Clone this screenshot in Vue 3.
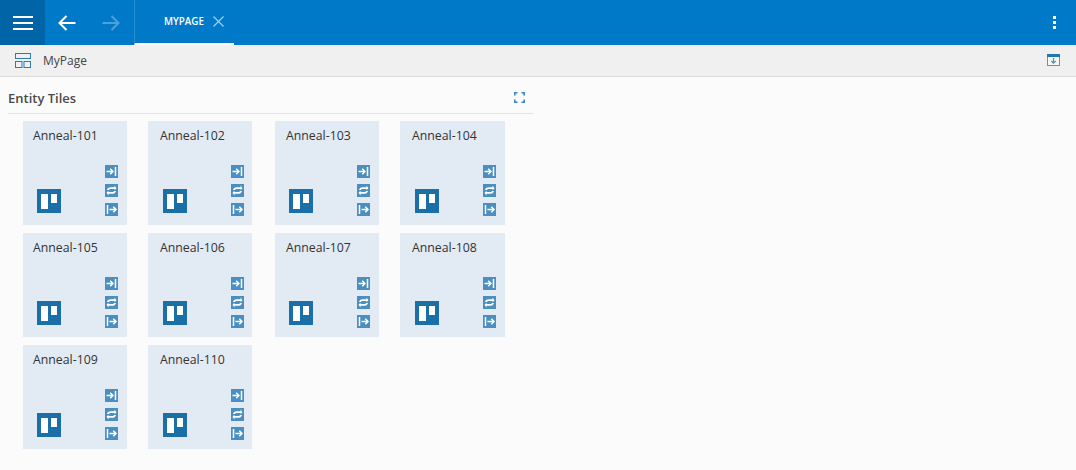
<script setup>
const tiles = Array.from({ length: 10 }, (_, i) => `Anneal-${101 + i}`)
</script>

<template>
  <div class="page">
    <header class="topbar">
      <button class="menu" aria-label="Menu">
        <svg width="20" height="14" viewBox="0 0 20 14"><path d="M0 1h20M0 7h20M0 13h20" stroke="#fff" stroke-width="2" /></svg>
      </button>
      <button class="nav" aria-label="Back">
        <svg width="18" height="16" viewBox="0 0 18 16"><path d="M8.5 1L1.5 8l7 7M2 8h15.5" fill="none" stroke="#fff" stroke-width="2" /></svg>
      </button>
      <button class="nav dim" aria-label="Forward">
        <svg width="18" height="16" viewBox="0 0 18 16"><path d="M9.5 1l7 7-7 7M16 8H.5" fill="none" stroke="#fff" stroke-width="2" /></svg>
      </button>
      <div class="tab">
        <span>MYPAGE</span>
        <svg width="11" height="11" viewBox="0 0 11 11"><path d="M.5.5l10 10M10.500.5l-10 10" stroke="#a9d2ee" stroke-width="1.1" /></svg>
      </div>
      <div class="dots" aria-label="More"><i></i><i></i><i></i></div>
    </header>

    <div class="toolbar">
      <svg class="page-icon" width="16" height="15" viewBox="0 0 16 15" fill="none" stroke="#2b7cb3">
        <rect x=".5" y=".5" width="15" height="5" />
        <rect x=".5" y="8.500" width="6.500" height="6" />
        <rect x="9" y="8.500" width="6.500" height="6" />
      </svg>
      <span class="page-name">MyPage</span>
      <svg class="download" width="13" height="12" viewBox="0 0 13 12">
        <rect x=".5" y=".5" width="12" height="11" fill="#f6f6f6" stroke="#4d9bd0" />
        <rect x="0" y="0" width="13" height="3" fill="#1f78b4" />
        <path d="M6.500 4v5M4.300 7l2.200 2.200L8.700 7" fill="none" stroke="#5a8fb3" stroke-width="1.2" />
      </svg>
    </div>

    <main class="content">
      <section class="panel">
        <div class="panel-head">
          <h2>Entity Tiles</h2>
          <svg width="11" height="11" viewBox="0 0 11 11" fill="none" stroke="#3d86b8" stroke-width="1.6">
            <path d="M.8 3.500V.8h2.700M7.500.8h2.700v2.700M10.200 7.500v2.700H7.500M3.500 10.200H.8V7.500" />
          </svg>
        </div>
        <div class="grid">
          <article v-for="name in tiles" :key="name" class="tile">
            <div class="tile-name">{{ name }}</div>
            <div class="tile-foot">
              <svg class="logo" width="24" height="24" viewBox="0 0 24 24">
                <rect width="24" height="24" fill="#1a6fa9" />
                <rect x="4" y="5" width="7" height="15" fill="#fff" />
                <rect x="14" y="5" width="6" height="9" fill="#fff" />
              </svg>
              <div class="actions">
                <svg width="13" height="13" viewBox="0 0 13 13">
                  <rect width="13" height="13" fill="#4a8fc0" />
                  <path d="M1.500 6.500h6M5.200 3.800l2.700 2.700-2.700 2.700M10.500 2v9" fill="none" stroke="#fff" stroke-width="1.500" />
                </svg>
                <svg width="13" height="13" viewBox="0 0 13 13">
                  <rect width="13" height="13" fill="#4a8fc0" />
                  <path d="M2 6C2.500 3.800 4 3.200 6 3.200h3.500V1.500l2 2.700-2 2.100V5H6C5 5 4.200 5.300 3.800 6zM11 7c-.5 2.200-2 2.800-4 2.800H3.500v1.700l-2-2.700 2-2.100V8H7c1 0 1.800-.3 2.200-1z" fill="#fff" />
                </svg>
                <svg width="13" height="13" viewBox="0 0 13 13">
                  <rect width="13" height="13" fill="#4a8fc0" />
                  <path d="M2.500 2v9M4.500 6.500h6.500M8.300 3.800L11 6.500 8.300 9.200" fill="none" stroke="#fff" stroke-width="1.500" />
                </svg>
              </div>
            </div>
          </article>
        </div>
      </section>
    </main>
  </div>
</template>

<style>
html, body { margin: 0; background: #fbfbfb; }
</style>

<style scoped>
.page {
  width: 1076px;
  height: 470px;
  overflow: hidden;
  background: #fbfbfb;
  font-family: "Open Sans", "Noto Sans", sans-serif;
  color: #333;
}
.topbar {
  height: 45px;
  background: #0079c9;
  display: flex;
  align-items: stretch;
}
button {
  border: 0;
  padding: 0;
  background: none;
  display: flex;
  align-items: center;
  justify-content: center;
}
.menu { width: 45px; background: #0064a6; }
.nav { width: 44px; }
.nav.dim { opacity: .3; }
.tab {
  margin-left: 1px;
  width: 100px;
  box-sizing: border-box;
  border-left: 1px solid #2b8fd3;
  border-bottom: 2px solid #fff;
  padding: 0 0 0 29px;
  display: flex;
  align-items: center;
  gap: 9px;
  color: #fff;
  font-size: 9.8px;
  font-weight: 600;
}
.dots {
  margin-left: auto;
  width: 44px;
  display: flex;
  flex-direction: column;
  align-items: center;
  justify-content: center;
  gap: 2px;
}
.dots i { width: 3px; height: 3px; background: #fff; }
.toolbar {
  height: 32px;
  box-sizing: border-box;
  background: #f0f0f0;
  border-bottom: 1px solid #dcdcdc;
  display: flex;
  align-items: center;
  padding: 0 16px 1px 15px;
}
.page-name { margin-left: 12px; font-size: 12px; color: #444; }
.download { margin-left: auto; }
.panel { width: 526px; margin-left: 8px; }
.panel-head {
  height: 37px;
  box-sizing: border-box;
  border-bottom: 1px solid #e3e3e3;
  display: flex;
  align-items: center;
  justify-content: space-between;
  padding: 5px 9px 0 0;
}
h2 { margin: 0; font-size: 13px; font-weight: 600; color: #4a4a4a; }
.grid {
  display: grid;
  grid-template-columns: 125px 127px 125px 105px;
  row-gap: 8px;
  padding: 7px 0 0 15px;
}
.tile {
  width: 104px;
  height: 104px;
  box-sizing: border-box;
  background: #e2ebf3;
  padding: 6px 9px 9px 10px;
  display: flex;
  flex-direction: column;
  justify-content: space-between;
}
.tile:nth-child(even) { padding-left: 11px; padding-right: 8px; }
.tile:nth-child(4n) { width: 105px; padding-right: 9px; }
.tile-name { font-size: 12.3px; line-height: 18px; color: #333; margin-left: 1px; }
.tile:nth-child(4n+1) .tile-name { margin-left: 0; }
.tile-foot { display: flex; justify-content: space-between; align-items: flex-end; margin-left: 4px; }
.logo { margin-bottom: 3px; }
.actions { display: flex; flex-direction: column; gap: 6px; }
.actions svg { display: block; }
</style>
